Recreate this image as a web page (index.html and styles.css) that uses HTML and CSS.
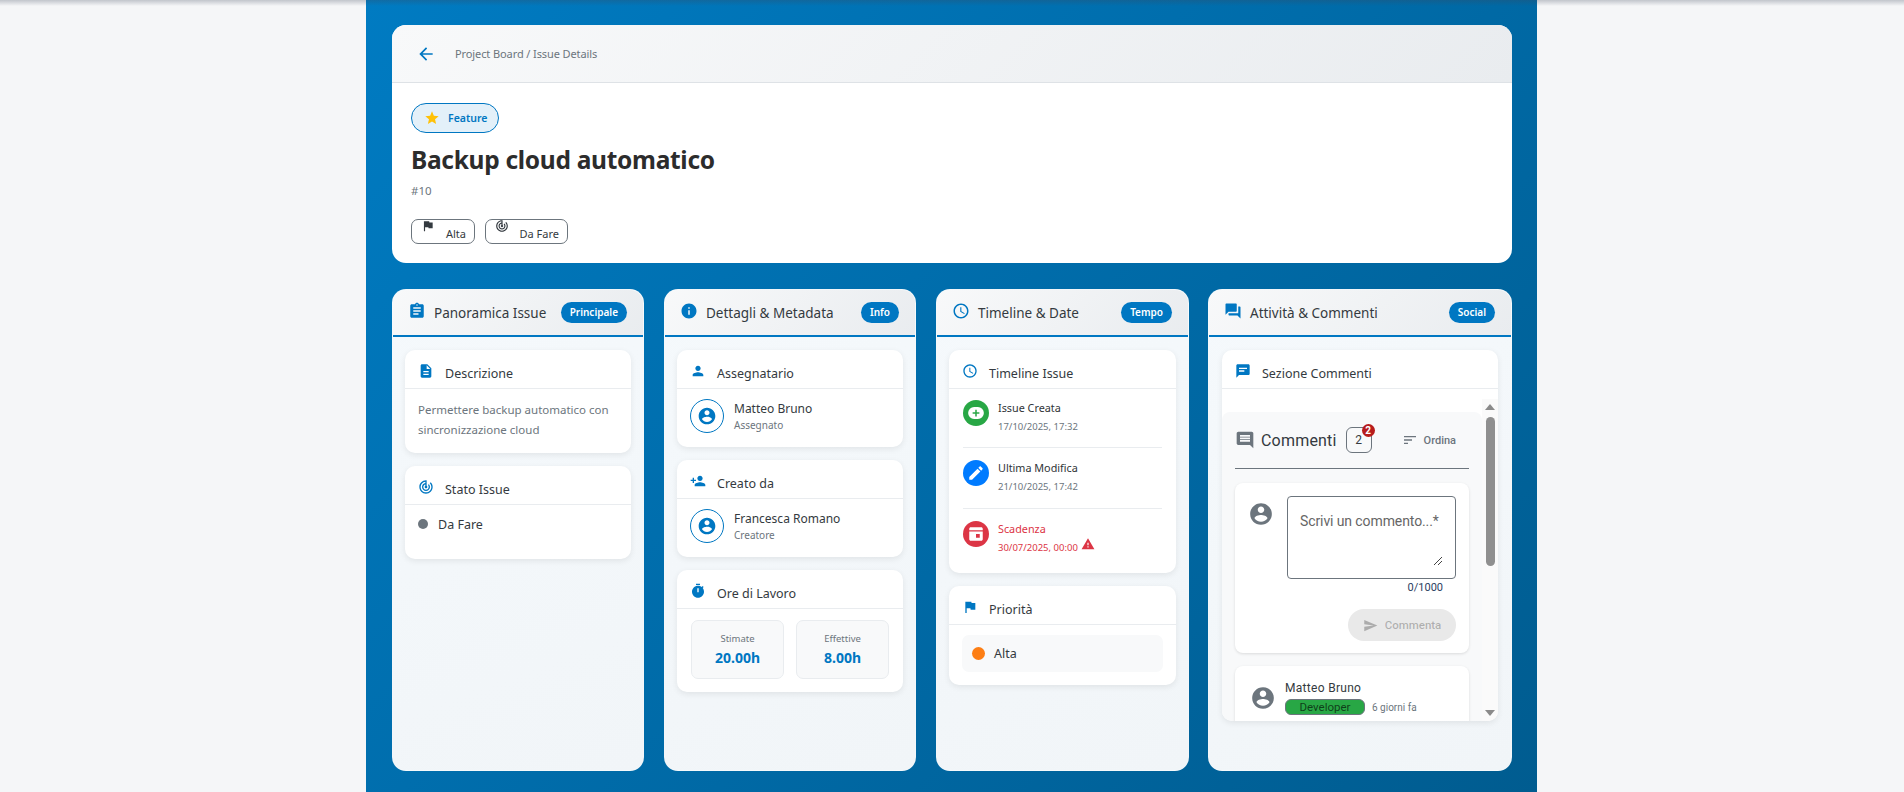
FILE: index.html
```html
<!DOCTYPE html>
<html lang="it">
<head>
<meta charset="utf-8">
<title>Project Board - Issue Details</title>
<link rel="stylesheet" href="styles.css">
</head>
<body>
<svg class="sprites" width="0" height="0">
  <symbol id="i-back" viewBox="0 0 24 24"><path d="M20 11H7.83l5.59-5.59L12 4l-8 8 8 8 1.41-1.41L7.83 13H20v-2z"/></symbol>
  <symbol id="i-star" viewBox="0 0 24 24"><path d="M12 17.27L18.18 21l-1.64-7.03L22 9.24l-7.19-.61L12 2 9.19 8.63 2 9.24l5.46 4.73L5.82 21z"/></symbol>
  <symbol id="i-flag" viewBox="0 0 24 24"><path d="M14.4 6L14 4H5v17h2v-7h5.6l.4 2h7V6z"/></symbol>
  <symbol id="i-track" viewBox="0 0 24 24"><path d="M19.07 4.93l-1.41 1.41C19.1 7.79 20 9.79 20 12c0 4.42-3.58 8-8 8s-8-3.58-8-8c0-4.08 3.05-7.44 7-7.93v2.02C8.16 6.57 6 9.03 6 12c0 3.31 2.69 6 6 6s6-2.69 6-6c0-1.66-.67-3.16-1.76-4.24l-1.41 1.41C15.55 9.9 16 10.9 16 12c0 2.21-1.79 4-4 4s-4-1.79-4-4c0-1.86 1.28-3.41 3-3.86v2.14c-.6.35-1 .98-1 1.72 0 1.1.9 2 2 2s2-.9 2-2c0-.74-.4-1.38-1-1.72V2h-1C6.48 2 2 6.48 2 12s4.48 10 10 10 10-4.48 10-10c0-2.76-1.12-5.26-2.93-7.07z"/></symbol>
  <symbol id="i-assignment" viewBox="0 0 24 24"><path d="M19 3h-4.18C14.4 1.84 13.3 1 12 1c-1.3 0-2.4.84-2.82 2H5c-1.1 0-2 .9-2 2v14c0 1.1.9 2 2 2h14c1.1 0 2-.9 2-2V5c0-1.1-.9-2-2-2zm-7 0c.55 0 1 .45 1 1s-.45 1-1 1-1-.45-1-1 .45-1 1-1zm2 14H7v-2h7v2zm3-4H7v-2h10v2zm0-4H7V7h10v2z"/></symbol>
  <symbol id="i-description" viewBox="0 0 24 24"><path d="M14 2H6c-1.1 0-1.99.9-1.99 2L4 20c0 1.1.89 2 1.99 2H18c1.1 0 2-.9 2-2V8l-6-6zm2 16H8v-2h8v2zm0-4H8v-2h8v2zm-3-5V3.5L18.5 9H13z"/></symbol>
  <symbol id="i-info" viewBox="0 0 24 24"><path d="M12 2C6.48 2 2 6.48 2 12s4.48 10 10 10 10-4.48 10-10S17.52 2 12 2zm1 15h-2v-6h2v6zm0-8h-2V7h2v2z"/></symbol>
  <symbol id="i-person" viewBox="0 0 24 24"><path d="M12 12c2.21 0 4-1.79 4-4s-1.79-4-4-4-4 1.79-4 4 1.79 4 4 4zm0 2c-2.67 0-8 1.34-8 4v2h16v-2c0-2.66-5.33-4-8-4z"/></symbol>
  <symbol id="i-person-add" viewBox="0 0 24 24"><path d="M15 12c2.21 0 4-1.79 4-4s-1.79-4-4-4-4 1.79-4 4 1.79 4 4 4zm-9-2V7H4v3H1v2h3v3h2v-3h3v-2H6zm9 4c-2.67 0-8 1.34-8 4v2h16v-2c0-2.66-5.33-4-8-4z"/></symbol>
  <symbol id="i-account" viewBox="0 0 24 24"><path d="M12 2C6.48 2 2 6.48 2 12s4.48 10 10 10 10-4.48 10-10S17.52 2 12 2zm0 3c1.66 0 3 1.34 3 3s-1.34 3-3 3-3-1.34-3-3 1.34-3 3-3zm0 14.2c-2.5 0-4.71-1.28-6-3.22.03-1.99 4-3.08 6-3.08 1.99 0 5.97 1.09 6 3.08-1.29 1.94-3.5 3.22-6 3.22z"/></symbol>
  <symbol id="i-timer" viewBox="0 0 24 24"><path d="M9 1h6v2H9zm10.03 6.39l1.42-1.42c-.43-.51-.9-.99-1.41-1.41l-1.42 1.42C16.07 4.74 14.12 4 12 4c-4.97 0-9 4.03-9 9s4.02 9 9 9 9-4.03 9-9c0-2.12-.74-4.07-1.97-5.61zM13 14h-2V8h2v6z"/></symbol>
  <symbol id="i-schedule" viewBox="0 0 24 24"><path d="M11.99 2C6.47 2 2 6.48 2 12s4.47 10 9.99 10C17.52 22 22 17.52 22 12S17.52 2 11.99 2zM12 20c-4.42 0-8-3.58-8-8s3.58-8 8-8 8 3.58 8 8-3.58 8-8 8zm.5-13H11v6l5.25 3.15.75-1.23-4.5-2.67z"/></symbol>
  <symbol id="i-add" viewBox="0 0 24 24"><path fill-rule="evenodd" d="M9.500 4h5a8 8 0 0 1 0 16h-5a8 8 0 0 1 0-16zM13 7.500h-2V11H7.500v2H11v3.500h2V13h3.500v-2H13z"/></symbol>
  <symbol id="i-edit" viewBox="0 0 24 24"><path d="M3 17.25V21h3.75L17.81 9.94l-3.75-3.75L3 17.25zM20.71 7.04c.39-.39.39-1.02 0-1.41l-2.34-2.34c-.39-.39-1.02-.39-1.41 0l-1.83 1.83 3.75 3.75 1.83-1.83z"/></symbol>
  <symbol id="i-event" viewBox="0 0 24 24"><path d="M5 3h14c1.1 0 2 .9 2 2v2H3V5c0-1.1.9-2 2-2zM3 8.500h18V19c0 1.100-.9 2-2 2H5c-1.100 0-2-.9-2-2V8.500zm9 3.500v5h5v-5h-5z"/></symbol>
  <symbol id="i-warning" viewBox="0 0 24 24"><path d="M1 21h22L12 2 1 21zm12-3h-2v-2h2v2zm0-4h-2v-4h2v4z"/></symbol>
  <symbol id="i-forum" viewBox="0 0 24 24"><path d="M21 6h-2v9H6v2c0 .55.45 1 1 1h11l4 4V7c0-.55-.45-1-1-1zm-4 6V3c0-.55-.45-1-1-1H3c-.55 0-1 .45-1 1v14l4-4h10c.55 0 1-.45 1-1z"/></symbol>
  <symbol id="i-chat" viewBox="0 0 24 24"><path d="M20 2H4c-1.100 0-2 .9-2 2v18l4-4h14c1.100 0 2-.9 2-2V4c0-1.100-.9-2-2-2zM6 7h12v2H6V7zm8 6H6v-2h8v2z"/></symbol>
  <symbol id="i-comment" viewBox="0 0 24 24"><path d="M21.99 4c0-1.100-.89-2-1.990-2H4c-1.100 0-2 .9-2 2v12c0 1.100.9 2 2 2h14l4 4-.01-18zM18 14H6v-2h12v2zm0-3H6V9h12v2zm0-3H6V6h12v2z"/></symbol>
  <symbol id="i-sort" viewBox="0 0 24 24"><path d="M3 18h6v-2H3v2zM3 6v2h18V6H3zm0 7h12v-2H3v2z"/></symbol>
  <symbol id="i-send" viewBox="0 0 24 24"><path d="M2.010 21L23 12 2.010 3 2 10l15 2-15 2z"/></symbol>
</svg>

<div class="top-shadow"></div>

<div class="page">

  <div class="issue-head">
    <div class="crumb-bar">
      <svg class="back-icon"><use href="#i-back"/></svg>
      <span class="crumb">Project Board / Issue Details</span>
    </div>
    <div class="issue-info">
      <span class="type-pill"><svg class="star-icon"><use href="#i-star"/></svg>Feature</span>
      <h1 class="issue-title">Backup cloud automatico</h1>
      <div class="issue-num">#10</div>
      <div class="chip-row">
        <span class="chip chip-alta"><svg class="chip-icon"><use href="#i-flag"/></svg><span class="chip-text">Alta</span></span>
        <span class="chip chip-fare"><svg class="chip-icon"><use href="#i-track"/></svg><span class="chip-text">Da Fare</span></span>
      </div>
    </div>
  </div>

  <div class="board">

    <section class="column">
      <header class="col-head">
        <svg class="col-icon"><use href="#i-assignment"/></svg>
        <h2 class="col-title">Panoramica Issue</h2>
        <span class="col-badge">Principale</span>
      </header>
      <div class="col-body">
        <div class="card">
          <div class="card-head"><svg class="card-icon"><use href="#i-description"/></svg><h3>Descrizione</h3></div>
          <p class="desc">Permettere backup automatico con sincronizzazione cloud</p>
        </div>
        <div class="card">
          <div class="card-head"><svg class="card-icon"><use href="#i-track"/></svg><h3>Stato Issue</h3></div>
          <div class="status-row"><span class="status-dot"></span>Da Fare</div>
        </div>
      </div>
    </section>

    <section class="column">
      <header class="col-head">
        <svg class="col-icon"><use href="#i-info"/></svg>
        <h2 class="col-title">Dettagli &amp; Metadata</h2>
        <span class="col-badge">Info</span>
      </header>
      <div class="col-body">
        <div class="card">
          <div class="card-head"><svg class="card-icon"><use href="#i-person"/></svg><h3>Assegnatario</h3></div>
          <div class="person">
            <span class="person-pic"><svg><use href="#i-account"/></svg></span>
            <div><div class="person-name">Matteo Bruno</div><div class="person-role">Assegnato</div></div>
          </div>
        </div>
        <div class="card">
          <div class="card-head"><svg class="card-icon"><use href="#i-person-add"/></svg><h3>Creato da</h3></div>
          <div class="person">
            <span class="person-pic"><svg><use href="#i-account"/></svg></span>
            <div><div class="person-name">Francesca Romano</div><div class="person-role">Creatore</div></div>
          </div>
        </div>
        <div class="card">
          <div class="card-head"><svg class="card-icon"><use href="#i-timer"/></svg><h3>Ore di Lavoro</h3></div>
          <div class="hours">
            <div class="hours-box"><div class="hours-label">Stimate</div><div class="hours-value">20.00h</div></div>
            <div class="hours-box"><div class="hours-label">Effettive</div><div class="hours-value">8.00h</div></div>
          </div>
        </div>
      </div>
    </section>

    <section class="column">
      <header class="col-head">
        <svg class="col-icon"><use href="#i-schedule"/></svg>
        <h2 class="col-title">Timeline &amp; Date</h2>
        <span class="col-badge">Tempo</span>
      </header>
      <div class="col-body">
        <div class="card">
          <div class="card-head"><svg class="card-icon"><use href="#i-schedule"/></svg><h3>Timeline Issue</h3></div>
          <div class="timeline">
            <div class="tl-item">
              <span class="tl-dot tl-green"><svg><use href="#i-add"/></svg></span>
              <div><div class="tl-title">Issue Creata</div><div class="tl-date">17/10/2025, 17:32</div></div>
            </div>
            <div class="tl-item">
              <span class="tl-dot tl-blue"><svg><use href="#i-edit"/></svg></span>
              <div><div class="tl-title">Ultima Modifica</div><div class="tl-date">21/10/2025, 17:42</div></div>
            </div>
            <div class="tl-item tl-late">
              <span class="tl-dot tl-red"><svg><use href="#i-event"/></svg></span>
              <div><div class="tl-title">Scadenza</div><div class="tl-date">30/07/2025, 00:00<svg class="warn-icon"><use href="#i-warning"/></svg></div></div>
            </div>
          </div>
        </div>
        <div class="card">
          <div class="card-head"><svg class="card-icon"><use href="#i-flag"/></svg><h3>Priorità</h3></div>
          <div class="prio-wrap"><div class="prio"><span class="prio-dot"></span>Alta</div></div>
        </div>
      </div>
    </section>

    <section class="column column-wide">
      <header class="col-head">
        <svg class="col-icon"><use href="#i-forum"/></svg>
        <h2 class="col-title">Attività &amp; Commenti</h2>
        <span class="col-badge">Social</span>
      </header>
      <div class="col-body">
        <div class="card card-comments">
          <div class="card-head"><svg class="card-icon"><use href="#i-chat"/></svg><h3>Sezione Commenti</h3></div>
          <div class="scroller">
            <div class="scroll-content">
              <div class="comments">
                <div class="comments-head">
                  <svg class="comments-icon"><use href="#i-comment"/></svg>
                  <span class="comments-title">Commenti</span>
                  <span class="count-box">2<span class="count-dot">2</span></span>
                  <span class="sort"><svg><use href="#i-sort"/></svg>Ordina</span>
                </div>
                <div class="form-card">
                  <svg class="avatar"><use href="#i-account"/></svg>
                  <div class="form-main">
                    <div class="textarea">Scrivi un commento...*
                      <svg class="grip" viewBox="0 0 8 8"><path d="M0 8L8 0M4 8L8 4" stroke="#444" fill="none"/></svg>
                    </div>
                    <div class="char-count">0/1000</div>
                    <div class="form-actions"><span class="send-btn"><svg><use href="#i-send"/></svg>Commenta</span></div>
                  </div>
                </div>
                <div class="comment">
                  <svg class="avatar"><use href="#i-account"/></svg>
                  <div>
                    <div class="comment-author">Matteo Bruno</div>
                    <div class="comment-meta"><span class="role-chip">Developer</span><span class="comment-when">6 giorni fa</span></div>
                  </div>
                </div>
              </div>
            </div>
            <div class="scrollbar">
              <span class="arrow arrow-up"></span>
              <span class="thumb-track"><span class="thumb"></span></span>
              <span class="arrow arrow-down"></span>
            </div>
          </div>
        </div>
      </div>
    </section>

  </div>
</div>
</body>
</html>
```

FILE: styles.css
```css
* {
  box-sizing: border-box;
}
html, body {
  margin: 0;
  height: 792px;
  overflow: hidden;
}
body {
  background: #f5f6f8;
  color: #343a40;
  font-family: "Noto Sans", "Open Sans", sans-serif;
  font-size: 13px;
}
h1, h2, h3, p {
  margin: 0;
  font-weight: normal;
}
svg {
  fill: currentColor;
  display: block;
  flex: none;
}
.sprites {
  position: absolute;
}
.top-shadow {
  position: absolute;
  left: 0;
  right: 0;
  top: 0;
  height: 6px;
  background: linear-gradient(to bottom, rgba(60, 70, 90, .28), rgba(60, 70, 90, 0));
  z-index: 2;
}

.page {
  width: 1171px;
  height: 792px;
  margin-left: 366px;
  padding: 25px 25px 0 26px;
  background: linear-gradient(135deg, #007bc2 0%, #005c90 100%);
}

/* top card */
.issue-head {
  height: 238px;
  background: #fff;
  border-radius: 14px;
  overflow: hidden;
}
.crumb-bar {
  height: 58px;
  display: flex;
  align-items: center;
  padding-left: 24px;
  background: linear-gradient(135deg, #f8f9fa, #e9ecef);
  border-bottom: 1px solid #dee2e6;
}
.back-icon {
  width: 20px;
  height: 20px;
  color: #0077c2;
}
.crumb {
  margin-left: 19px;
  font-size: 11px;
  letter-spacing: -.1px;
  color: #6c757d;
}
.issue-info {
  padding: 20px 19px 0;
}
.type-pill {
  display: inline-flex;
  align-items: center;
  height: 30px;
  width: 88px;
  padding-left: 12px;
  background: #e3f0f9;
  border: 1px solid #0077c2;
  border-radius: 15px;
  color: #0077c2;
  font-size: 10.500px;
  font-weight: 600;
}
.star-icon {
  width: 16px;
  height: 16px;
  margin-right: 8px;
  color: #ffc107;
}
.issue-title {
  margin-top: 9px;
  font-size: 24.500px;
  letter-spacing: -.3px;
  line-height: 36px;
  font-weight: 700;
  color: #2c2c2c;
}
.issue-num {
  margin-top: 4px;
  font-size: 11.500px;
  line-height: 18px;
  color: #6c757d;
}
.chip-row {
  display: flex;
  gap: 10px;
  margin-top: 19px;
}
.chip {
  display: flex;
  height: 25px;
  padding: 0 8px 0 9px;
  border: 1px solid #6c757d;
  border-radius: 7px;
  color: #343a40;
  font-size: 11px;
}
.chip-alta {
  width: 64px;
}
.chip-fare {
  width: 83px;
}
.chip-icon {
  width: 14px;
  height: 14px;
  margin-top: -1px;
}
.chip-text {
  margin: 6px 0 0 auto;
  line-height: 16px;
}

/* columns */
.board {
  display: grid;
  grid-template-columns: 252px 252px 253px 1fr;
  gap: 20px;
  margin-top: 26px;
  height: 482px;
}
.column {
  display: flex;
  flex-direction: column;
  background: linear-gradient(160deg, #f5f9fc, #f1f5f8);
  border: 1px solid rgba(255, 255, 255, .15);
  border-radius: 14px;
  overflow: hidden;
}
.column-wide {
  margin-left: -1px;
}
.col-head {
  display: flex;
  align-items: center;
  flex: none;
  height: 47px;
  padding: 0 16px 0 15px;
  background: linear-gradient(135deg, #f8f9fa, #e9ecef);
  border-bottom: 2px solid #0077c2;
}
.col-icon {
  width: 18px;
  height: 18px;
  color: #0077c2;
  margin-top: -3px;
}
.col-title {
  margin-left: 8px;
  font-size: 13.500px;
  color: #343a40;
}
.col-badge {
  margin-left: auto;
  height: 21px;
  padding: 0 9px;
  background: #0077c2;
  border-radius: 11px;
  color: #fff;
  font-size: 10px;
  font-weight: 600;
  line-height: 21px;
}
.col-body {
  flex: 1;
  display: flex;
  flex-direction: column;
  gap: 13px;
  padding: 13px 12px;
  min-height: 0;
}
.column-wide .col-body {
  padding: 13px 13px;
}

/* cards */
.card {
  background: #fff;
  border-radius: 10px;
  box-shadow: 0 2px 6px rgba(0, 0, 0, .08);
  overflow: hidden;
}
.card-head {
  display: flex;
  height: 39px;
  padding: 13px 13px 0;
  border-bottom: 1px solid #e9ecef;
}
.card-icon {
  width: 16px;
  height: 16px;
  color: #0077c2;
}
.card-head h3 {
  margin-left: 11px;
  margin-top: 2px;
  font-size: 12.500px;
  line-height: 18px;
  color: #343a40;
}
.desc {
  padding: 11px 13px 13px;
  font-size: 11.500px;
  line-height: 20px;
  color: #6c757d;
}
.status-row {
  display: flex;
  align-items: center;
  height: 54px;
  padding: 0 13px 16px;
  font-size: 12.500px;
}
.status-dot {
  width: 10px;
  height: 10px;
  margin-right: 10px;
  border-radius: 50%;
  background: #6c757d;
}

.person {
  display: flex;
  align-items: center;
  gap: 10px;
  height: 58px;
  padding: 0 13px 4px;
}
.person-pic {
  display: flex;
  align-items: center;
  justify-content: center;
  width: 34px;
  height: 34px;
  border: 1px solid #0077c2;
  border-radius: 50%;
  color: #0077c2;
}
.person-pic svg {
  width: 20px;
  height: 20px;
}
.person-name {
  font-size: 12px;
  line-height: 16px;
}
.person-role {
  margin-top: 1px;
  font-size: 10px;
  line-height: 14px;
  color: #6c757d;
}

.hours {
  display: grid;
  grid-template-columns: 1fr 1fr;
  gap: 12px;
  padding: 11px 14px 13px;
}
.hours-box {
  height: 59px;
  padding-top: 11px;
  background: #f8f9fa;
  border: 1px solid #e9ecef;
  border-radius: 7px;
  text-align: center;
}
.hours-label {
  font-size: 9.500px;
  line-height: 14px;
  color: #6c757d;
}
.hours-value {
  margin-top: 3px;
  font-size: 14px;
  line-height: 18px;
  font-weight: 700;
  color: #0077c2;
}

.timeline {
  padding: 11px 14px 0;
  height: 184px;
}
.tl-item {
  display: flex;
  gap: 9px;
  height: 61px;
  padding-top: 12px;
  border-bottom: 1px solid #e9ecef;
}
.tl-item:first-child {
  height: 48px;
  padding-top: 0;
}
.tl-item:last-child {
  border-bottom: 0;
}
.tl-dot {
  display: flex;
  align-items: center;
  justify-content: center;
  width: 26px;
  height: 26px;
  border-radius: 50%;
  color: #fff;
}
.tl-dot svg {
  width: 18px;
  height: 18px;
}
.tl-green {
  background: #28a745;
}
.tl-blue {
  background: #007bff;
}
.tl-red {
  background: #dc3545;
}
.tl-title {
  font-size: 10.800px;
  line-height: 16px;
  color: #2f3437;
}
.tl-date {
  display: flex;
  margin-top: 4px;
  font-size: 9.500px;
  line-height: 14px;
  color: #6c757d;
}
.tl-late .tl-title,
.tl-late .tl-date {
  color: #dc3545;
}
.warn-icon {
  width: 14px;
  height: 14px;
  margin: -4px 0 0 3px;
}
.prio-wrap {
  padding: 10px 13px 13px;
}
.prio {
  display: flex;
  align-items: center;
  height: 37px;
  padding-left: 10px;
  background: #f8f9fa;
  border-radius: 7px;
  font-size: 12.500px;
}
.prio-dot {
  width: 13px;
  height: 13px;
  margin-right: 9px;
  border-radius: 50%;
  background: #fd7e14;
}

/* comments */
.card-comments {
  height: 371px;
  display: flex;
  flex-direction: column;
}
.scroller {
  flex: 1;
  min-height: 0;
  display: flex;
  padding-top: 10px;
}
.scroll-content {
  flex: 1;
  min-width: 0;
  overflow: hidden;
  padding-top: 13px;
  font-family: Roboto, "Noto Sans", sans-serif;
}
.comments {
  padding: 0 13px 13px;
  background: #f8f9fa;
  border-radius: 8px;
}
.comments-head {
  display: flex;
  align-items: center;
  height: 57px;
  border-bottom: 1px solid #6c757d;
}
.comments-icon {
  width: 20px;
  height: 20px;
  color: #6c757d;
}
.comments-title {
  margin-left: 6px;
  font-size: 16px;
  letter-spacing: .2px;
  color: #343a40;
}
.count-box {
  position: relative;
  width: 26px;
  height: 26px;
  margin-left: 9px;
  border: 1px solid #6c757d;
  border-radius: 6px;
  font-size: 12px;
  line-height: 24px;
  text-align: center;
  color: #343a40;
}
.count-dot {
  position: absolute;
  top: -4px;
  right: -4px;
  width: 13px;
  height: 13px;
  border-radius: 50%;
  background: #b71c1c;
  color: #fff;
  font-size: 10px;
  font-weight: 700;
  line-height: 13px;
}
.sort {
  display: flex;
  align-items: center;
  margin-left: auto;
  margin-right: 13px;
  font-size: 11px;
  font-weight: 500;
  color: #6c757d;
}
.sort svg {
  width: 16px;
  height: 16px;
  margin-right: 6px;
}
.form-card,
.comment {
  display: flex;
  background: #fff;
  border-radius: 8px;
  box-shadow: 0 1px 3px rgba(0, 0, 0, .12);
}
.form-card {
  height: 170px;
  margin-top: 14px;
  padding: 13px 13px 0;
}
.avatar {
  width: 26px;
  height: 26px;
  color: #6c757d;
}
.form-card .avatar {
  margin: 5px 0 0;
}
.form-main {
  flex: 1;
  min-width: 0;
  margin-left: 13px;
}
.textarea {
  position: relative;
  height: 83px;
  padding: 16px 12px;
  border: 1px solid #6c757d;
  border-radius: 4px;
  background: #fff;
  white-space: nowrap;
  font-size: 14px;
  line-height: 16px;
  letter-spacing: -.1px;
  color: #666;
}
.grip {
  position: absolute;
  right: 13px;
  bottom: 13px;
  width: 8px;
  height: 8px;
}
.char-count {
  margin-top: 2px;
  padding-right: 13px;
  text-align: right;
  font-size: 11px;
  line-height: 13px;
  color: #2c3e60;
}
.form-actions {
  display: flex;
  justify-content: flex-end;
  margin-top: 15px;
}
.send-btn {
  display: flex;
  align-items: center;
  justify-content: center;
  width: 108px;
  height: 32px;
  border-radius: 16px;
  background: #e9e9e9;
  color: rgba(0, 0, 0, .26);
  font-size: 11.500px;
  font-weight: 500;
}
.send-btn svg {
  width: 15px;
  height: 15px;
  margin-right: 7px;
}
.comment {
  height: 70px;
  margin-top: 13px;
  padding: 14px 9px 0 15px;
  gap: 9px;
}
.comment .avatar {
  margin-top: 5px;
}
.comment-author {
  font-size: 12px;
  line-height: 16px;
  letter-spacing: .3px;
  color: #343a40;
}
.comment-meta {
  display: flex;
  align-items: center;
  margin-top: 3px;
}
.role-chip {
  width: 80px;
  height: 16px;
  border: 1px solid #6c757d;
  border-radius: 6px;
  background: #28a745;
  font-size: 11.500px;
  line-height: 14px;
  text-align: center;
  color: rgba(0, 0, 0, .65);
}
.comment-when {
  margin-left: 7px;
  font-size: 10px;
  color: #6c757d;
}
.scrollbar {
  flex: none;
  width: 16px;
  display: flex;
  flex-direction: column;
  align-items: center;
  background: #fafafa;
  padding: 5px 0;
}
.arrow {
  width: 0;
  height: 0;
  border-left: 5px solid transparent;
  border-right: 5px solid transparent;
}
.arrow-up {
  border-bottom: 6px solid #8a8a8a;
}
.arrow-down {
  border-top: 6px solid #8a8a8a;
}
.thumb-track {
  flex: 1;
  width: 9px;
  padding-top: 7px;
}
.thumb {
  display: block;
  height: 149px;
  background: #8f8f8f;
  border-radius: 5px;
}
```
